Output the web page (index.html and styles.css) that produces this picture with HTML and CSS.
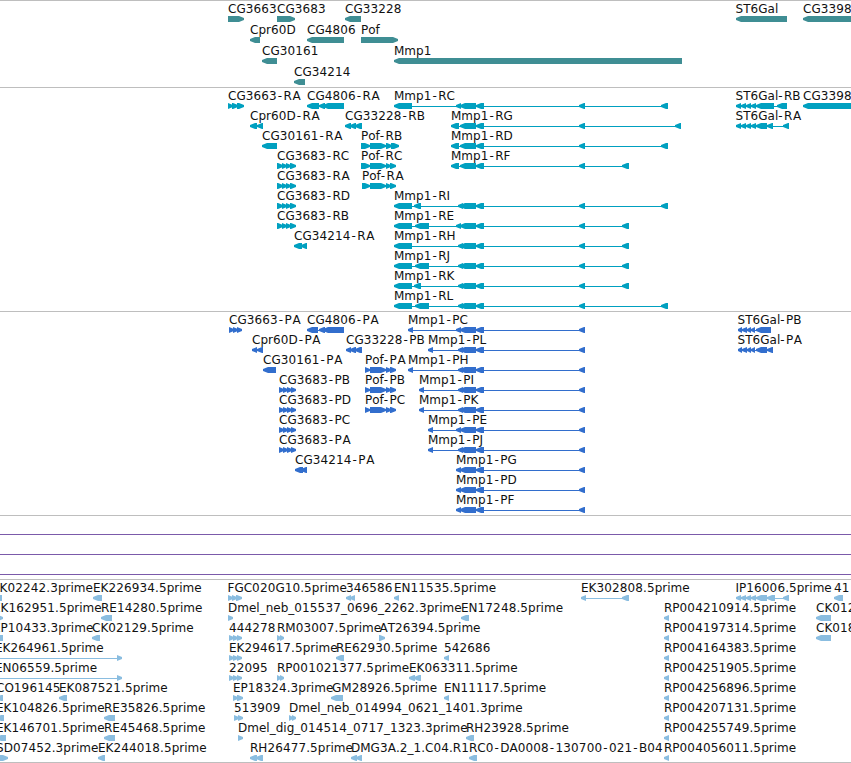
FILE: index.html
```
<!DOCTYPE html>
<html lang="en">
<head>
    <meta charset="UTF-8">
    <meta name="viewport" content="width=device-width, initial-scale=1.0">
    <title>Genome Browser</title>
    <link rel="stylesheet" href="styles.css">
</head>
<body>
    <div class="browser">
        <section class="track genes" id="genes"></section>
        <section class="track transcripts" id="transcripts"></section>
        <section class="track proteins" id="proteins"></section>
        <section class="track regions">
            <div class="region-line"></div>
            <div class="region-line"></div>
            <div class="region-line"></div>
        </section>
        <section class="track ests" id="ests"></section>
    </div>

    <script src="tracks.js"></script>
</body>
</html>
```
FILE: styles.css
```
body {
    margin: 0;
    background: white;
    font-family: "DejaVu Sans", sans-serif;
    overflow: hidden;
}
.browser {
    width: 851px;
}
.track {
    box-sizing: border-box;
    border-top: 1px solid #bebebe;
    overflow: hidden;
}
.track svg {
    display: block;
    width: 100%;
    height: 100%;
}
.track text {
    font-size: 12px;
    font-kerning: none;
    fill: #111;
}
.genes {
    height: 87px;
    color: #3f8e94;
}
.transcripts {
    height: 224px;
    color: #00a0c0;
}
.proteins {
    height: 204px;
    color: #326ecd;
}
.regions {
    height: 64px;
    padding-top: 18px;
}
.region-line {
    height: 1px;
    margin-bottom: 19px;
    background: #7b5aaa;
}
.ests {
    height: 184px;
    border-bottom: 1px solid #bebebe;
    color: #8abde0;
}
.block {
    fill: currentColor;
}
.intron {
    stroke: currentColor;
    stroke-width: 1;
    shape-rendering: crispEdges;
}
```
FILE: tracks.js
```
const SVG_NS = 'http://www.w3.org/2000/svg';

// Shared exons of the Mmp1 gene
const mmp = '460-476 476-484 579-585';
const st6 = '736-741 741-746 746-751 751-756';
const st6p = '738-742 742-747 747-751 751-755';
const cg3683r = '277-283 282-287 286-291 290-296';
const cg3683p = '279-284 283-288 287-292 291-296';
const pofP = '365-370 370-386 386-391 390-396';

// Each feature: label, label position, strand, exons
const genes = [
    [['CG3663', 228, '>', '228-244'], ['CG3683', 277, '>', '277-295'], ['CG33228', 345, '<', '345-361'],
     ['ST6Gal', 735.5, '<', '736-787'], ['CG3398', 803, '<', '803-860']],
    [['Cpr60D', 250, '<', '250-260'], ['CG4806', 307, '<', '307-344'], ['Pof', 361, '>', '361-398']],
    [['CG30161', 262, '<', '262-277'], ['Mmp1', 394, '<', '394-682']],
    [['CG34214', 294, '<', '294-305']]
];

const transcripts = [
    [['CG3663-RA', 228, '>', '228-233 232-238 237-244'], ['CG4806-RA', 307, '<', '307-319 319-325 323-344'],
     ['Mmp1-RC', 394, '<', '394-412 456-461 ' + mmp + ' 661-668'],
     ['ST6Gal-RB', 735.5, '<', st6 + ' 756-774 777-787'], ['CG3398', 803, '<', '803-860']],
    [['Cpr60D-RA', 250, '<', '250-257 257-263'], ['CG33228-RB', 345, '<', '345-351 350-356 355-362'],
     ['Mmp1-RG', 451, '<', '451-459 ' + mmp + ' 675-681'],
     ['ST6Gal-RA', 735.5, '<', st6 + ' 756-767 767-773 783-789']],
    [['CG30161-RA', 262, '<', '262-277'], ['Pof-RB', 361, '>', '361-370 370-386 386-392 391-399'],
     ['Mmp1-RD', 451, '<', '451-459 ' + mmp + ' 661-668']],
    [['CG3683-RC', 277, '>', cg3683r], ['Pof-RC', 361, '>', '361-370 370-386 386-391 390-396'],
     ['Mmp1-RF', 451, '<', '451-459 ' + mmp + ' 622-629']],
    [['CG3683-RA', 277, '>', cg3683r], ['Pof-RA', 362, '>', '362-370 370-386 386-391 390-396']],
    [['CG3683-RD', 277, '>', cg3683r], ['Mmp1-RI', 394, '<', '394-412 414-421 458-463 ' + mmp + ' 661-668']],
    [['CG3683-RB', 277, '>', cg3683r], ['Mmp1-RE', 394, '<', '394-412 415-429 456-461 ' + mmp + ' 622-629']],
    [['CG34214-RA', 294, '<', '294-302 301-307'], ['Mmp1-RH', 394, '<', '394-412 458-463 ' + mmp + ' 622-629']],
    [['Mmp1-RJ', 394, '<', '394-412 415-429 458-463 ' + mmp + ' 622-629']],
    [['Mmp1-RK', 394, '<', '394-412 414-421 458-463 ' + mmp + ' 622-629']],
    [['Mmp1-RL', 394, '<', '394-412 415-429 458-463 ' + mmp + ' 661-668']]
];

const proteins = [
    [['CG3663-PA', 229, '>', '229-234 233-238 237-242'], ['CG4806-PA', 307, '<', '307-318 319-325 323-344'],
     ['Mmp1-PC', 408, '<', '408-413 456-461 ' + mmp], ['ST6Gal-PB', 737.5, '<', st6p + ' 756-771']],
    [['Cpr60D-PA', 252, '<', '252-257 257-263'], ['CG33228-PB', 346, '<', '346-351 350-356 355-362'],
     ['Mmp1-PL', 428, '<', '428-433 458-463 ' + mmp], ['ST6Gal-PA', 737.5, '<', st6p + ' 756-767 767-773']],
    [['CG30161-PA', 263, '<', '263-276'], ['Pof-PA', 365, '>', pofP],
     ['Mmp1-PH', 408, '<', '408-413 458-463 ' + mmp]],
    [['CG3683-PB', 279, '>', cg3683p], ['Pof-PB', 365, '>', pofP], ['Mmp1-PI', 419, '<', '419-424 458-463 ' + mmp]],
    [['CG3683-PD', 279, '>', cg3683p], ['Pof-PC', 365, '>', pofP], ['Mmp1-PK', 419, '<', '419-424 458-463 ' + mmp]],
    [['CG3683-PC', 279, '>', cg3683p], ['Mmp1-PE', 428, '<', '428-433 456-461 ' + mmp]],
    [['CG3683-PA', 279, '>', cg3683p], ['Mmp1-PJ', 428, '<', '428-433 458-463 ' + mmp]],
    [['CG34214-PA', 295, '<', '295-303 301-307'], ['Mmp1-PG', 456, '<', '456-461 ' + mmp]],
    [['Mmp1-PD', 456, '<', '456-461 ' + mmp]],
    [['Mmp1-PF', 456, '<', '456-461 ' + mmp]]
];

const ests = [
    [['EK02242.3prime', -8, '<', '-8_2'], ['EK226934.5prime', 93, '<', '93-102'],
     ['FGC020G10.5prime', 227.5, '>', '228-233 232-237 236-242'], ['346586', 346, '<', '346-351 350-355'],
     ['EN11535.5prime', 394, '<', '394-399'], ['EK302808.5prime', 581, '<', '581-586 622-629'],
     ['IP16006.5prime', 735.5, '<', st6 + ' 756-767 767-775 783-789'], ['41', 834, '<', '834-843']],
    [['EK162951.5prime', -7, '>', '-7_3'], ['RE14280.5prime', 101, '<', '101-112'],
     ['Dmel_neb_015537_0696_2262.3prime', 228, '>', '228-233'], ['EN17248.5prime', 461, '<', '461-469'],
     ['RP004210914.5prime', 664, '<', '664-669'], ['CK012', 816, '<', '816-831']],
    [['EP10433.3prime', -7, '<', '-7_3'], ['CK02129.5prime', 92, '<', '92-100'],
     ['444278', 229, '>', '229-234 233-238 237-242'], ['RM03007.5prime', 277, '>', '277-281 280-284'],
     ['AT26394.5prime', 379.5, '>', '379-385'], ['RP004197314.5prime', 664, '<', '664-669'], ['CK018', 816, '<', '816-831']],
    [['EK264961.5prime', -5, '>', '-5_-1 117-122'], ['EK294617.5prime', 229, '>', '229-234 233-238 237-242'],
     ['RE62930.5prime', 336, '<', '336-344'], ['542686', 444, '<', '444-449'], ['RP004164383.5prime', 664, '<', '664-669']],
    [['EN06559.5prime', -5, '>', '-5_-1 117-122'], ['22095', 229, '>', '229-234 233-238 237-242'],
     ['RP001021377.5prime', 277, '>', '277-281 280-284'], ['EK063311.5prime', 409, '<', '409-415 414-421'],
     ['RP004251905.5prime', 664, '<', '664-669']],
    [['CO196145', -4, '<', '-4_3'], ['EK087521.5prime', 59, '<', '59-67'], ['EP18324.3prime', 233, '>', '233-238 237-243'],
     ['GM28926.5prime', 332, '<', '331-343'], ['EN11117.5prime', 444, '<', '444-449'], ['RP004256896.5prime', 664, '<', '664-669']],
    [['EK104826.5prime', -4, '<', '-4_4'], ['RE35826.5prime', 104, '<', '104-115'], ['513909', 234, '>', '234-239 238-243'],
     ['Dmel_neb_014994_0621_1401.3prime', 289, '>', '289-293 292-296'], ['RP004207131.5prime', 664, '<', '664-669']],
    [['EK146701.5prime', -4, '<', '-4_6'], ['RE45468.5prime', 104, '<', '104-115'],
     ['Dmel_dig_014514_0717_1323.3prime', 238, '>', '238-243'], ['RH23928.5prime', 466, '<', '466-474'],
     ['RP004255749.5prime', 664, '<', '664-669']],
    [['SD07452.3prime', -4, '>', '-4_8'], ['EK244018.5prime', 98, '<', '98-105'], ['RH26477.5prime', 250, '<', '250-257 256-263'],
     ['DMG3A.2_1.C04.R1', 351, '<', '351-357 356-362'], ['RC0-DA0008-130700-021-B04', 469, '<', '469-477'],
     ['RP004056011.5prime', 664, '<', '664-669']]
];

function add(parent, name, attrs) {
    const el = document.createElementNS(SVG_NS, name);
    for (const key in attrs) {
        el.setAttribute(key, attrs[key]);
    }
    parent.appendChild(el);
    return el;
}

// Extra space in front of each character: digits run a little wide, hyphens more so
function spacing(label) {
    const chars = label.split('');
    return chars.map((ch, i) => {
        const prev = chars[i - 1] || '';
        let dx = 0;
        if (/\d/.test(prev)) dx += 0.13;
        if (ch === '-') dx += 1;
        if (prev === '-') dx += 1.4;
        if (ch === 'A' && i === chars.length - 1) dx += 0.6;
        if (/^(Pof|ST6)/.test(label) && ch === '-') dx -= 1;
        return dx.toFixed(2);
    }).join(' ');
}

// "_" separates the ends of an exon that starts left of the view
function parseExons(text) {
    return text.split(' ').map(part => part.split(part.includes('_') ? '_' : '-').map(Number));
}

// Box with a blunt tip, two pixels high at its point
function arrow(start, end, strand, y) {
    const tip = Math.min(5, end - start);
    if (strand === '<') {
        return `${start},${y + 2} ${start + tip},${y} ${end},${y} ${end},${y + 6} ${start + tip},${y + 6} ${start},${y + 4}`;
    }
    return `${end},${y + 2} ${end - tip},${y} ${start},${y} ${start},${y + 6} ${end - tip},${y + 6} ${end},${y + 4}`;
}

function drawTrack(id, rows, pitch) {
    const svg = add(document.getElementById(id), 'svg', {});
    rows.forEach((row, i) => {
        const top = i * pitch;
        row.forEach(([label, x, strand, exonText]) => {
            const exons = parseExons(exonText);
            add(svg, 'text', { x: x, y: top + 12, dx: spacing(label) }).textContent = label;
            if (exons.length > 1) {
                add(svg, 'line', {
                    class: 'intron',
                    x1: exons[0][0] + 1, x2: exons[exons.length - 1][1] - 1,
                    y1: top + 18.5, y2: top + 18.5
                });
            }
            exons.forEach(([start, end]) => {
                add(svg, 'polygon', { class: 'block', points: arrow(start, end, strand, top + 15) });
            });
        });
    });
}

drawTrack('genes', genes, 21);
drawTrack('transcripts', transcripts, 20);
drawTrack('proteins', proteins, 20);
drawTrack('ests', ests, 20);
```
